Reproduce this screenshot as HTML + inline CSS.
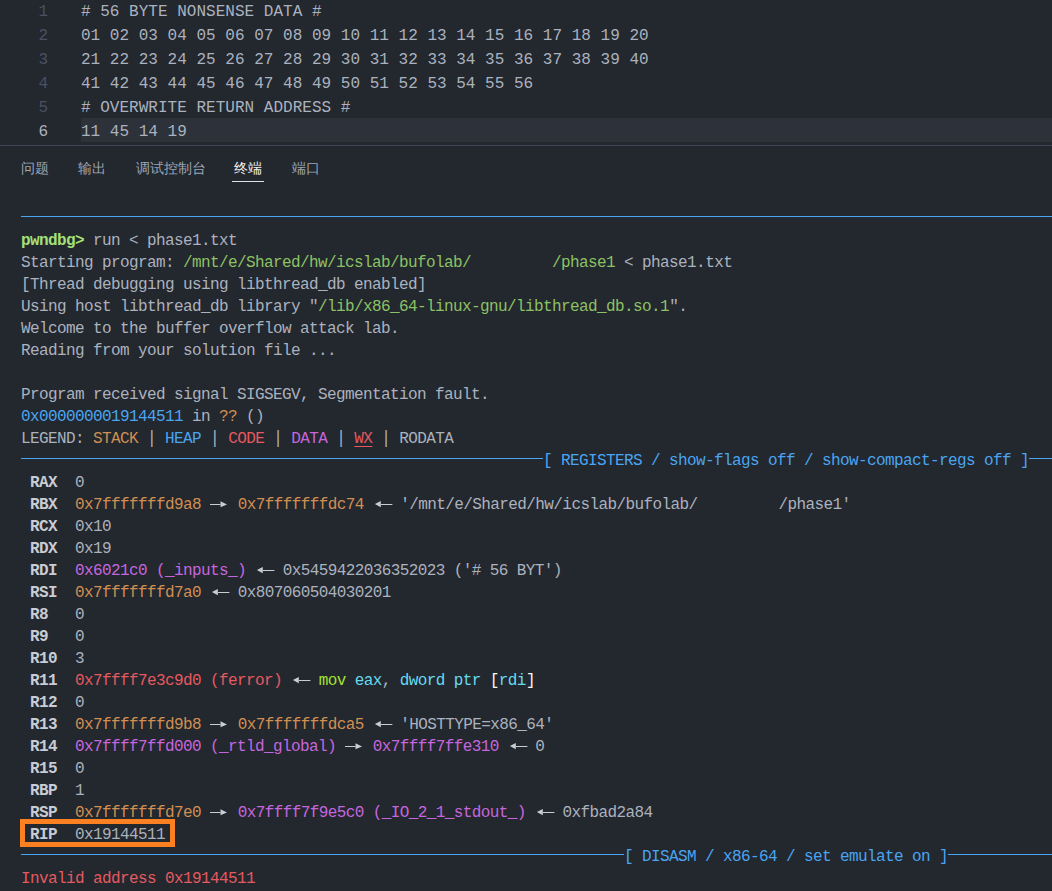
<!DOCTYPE html>
<html><head><meta charset="utf-8"><style>
html,body{margin:0;padding:0;}
body{width:1052px;height:891px;overflow:hidden;background:#23272e;position:relative;font-family:"Liberation Mono",monospace;}
.cur{position:absolute;left:81px;top:118px;width:971px;height:24px;background:#2c313a;}
.ln{position:absolute;left:0;width:48px;text-align:right;height:24px;line-height:24px;font-size:16px;color:#495162;padding-top:2px;}
.ln.act{color:#abb2bf;}
.el{position:absolute;left:81px;height:24px;line-height:24px;font-size:16px;color:#abb2bf;white-space:pre;padding-top:2px;letter-spacing:0.02px;}
.pborder{position:absolute;left:0;top:145px;width:1052px;height:1px;background:#3e4452;}
.panel{position:absolute;left:0;top:146px;width:1052px;height:745px;background:#23272e;}
.tab{position:absolute;top:158px;font-family:"Liberation Sans",sans-serif;font-size:14px;line-height:20px;color:#9da5b4;}
.tab.act{color:#f0f0f0;}
.uline{position:absolute;left:232px;top:181px;width:32px;height:1px;background:#e0e2e6;}
.row{position:absolute;left:21px;height:22px;line-height:22px;font-size:16px;letter-spacing:-0.6px;white-space:pre;color:#abb2bf;padding-top:2px;box-sizing:border-box;}
.hl{position:absolute;height:1px;background:#4aa5f0;}
.ar{vertical-align:top;margin-top:-2px;color:#c8ccd4;margin-right:0.6px;}
.pg{color:#a5e075;font-weight:bold;}
.g{color:#8cc265;}
.b{color:#4aa5f0;}
.y{color:#d18f52;}
.r{color:#e45a60;}
.m{color:#c666de;}
.u{text-decoration:underline;text-underline-offset:3px;text-decoration-thickness:1px;}
.rn{font-weight:bold;color:#c8ccd4;}
.mv{color:#a6e22e;}
.ea{color:#66d9ef;}
.dw{color:#66d9ef;}
.br{color:#f8f8f2;}
.pp{display:inline-block;transform:translateY(-1px) scaleY(1.2);transform-origin:50% 9.5px;}
.box{position:absolute;left:20px;top:819px;width:145px;height:18px;border:5px solid #fb8022;}
</style></head><body>
<div class="cur"></div>
<div class="ln" style="top:-2px">1</div><div class="el" style="top:-2px"># 56 BYTE NONSENSE DATA #</div><div class="ln" style="top:22px">2</div><div class="el" style="top:22px">01 02 03 04 05 06 07 08 09 10 11 12 13 14 15 16 17 18 19 20</div><div class="ln" style="top:46px">3</div><div class="el" style="top:46px">21 22 23 24 25 26 27 28 29 30 31 32 33 34 35 36 37 38 39 40</div><div class="ln" style="top:70px">4</div><div class="el" style="top:70px">41 42 43 44 45 46 47 48 49 50 51 52 53 54 55 56</div><div class="ln" style="top:94px">5</div><div class="el" style="top:94px"># OVERWRITE RETURN ADDRESS #</div><div class="ln act" style="top:118px">6</div><div class="el" style="top:118px">11 45 14 19</div>
<div class="pborder"></div>
<div class="panel">
</div>
<div class="tab" style="left:21px">问题</div>
<div class="tab" style="left:78px">输出</div>
<div class="tab" style="left:136px">调试控制台</div>
<div class="tab act" style="left:234px">终端</div>
<div class="tab" style="left:292px">端口</div>
<div class="uline"></div>
<div class="hl" style="top:216px;left:21px;width:1031px"></div><div class="row" style="top:228px"><span class="pg">pwndbg&gt;</span> run &lt; phase1.txt</div><div class="row" style="top:250px">Starting program: <span class="g">/mnt/e/Shared/hw/icslab/bufolab/         /phase1</span> &lt; phase1.txt</div><div class="row" style="top:272px">[Thread debugging using libthread_db enabled]</div><div class="row" style="top:294px">Using host libthread_db library "<span class="g">/lib/x86_64-linux-gnu/libthread_db.so.1</span>".</div><div class="row" style="top:316px">Welcome to the buffer overflow attack lab.</div><div class="row" style="top:338px">Reading from your solution file ...</div><div class="row" style="top:360px"></div><div class="row" style="top:382px">Program received signal SIGSEGV, Segmentation fault.</div><div class="row" style="top:404px"><span class="b">0x0000000019144511</span> in <span class="y">??</span> ()</div><div class="row" style="top:426px">LEGEND: <span class="y">STACK</span> <span class="pp">|</span> <span class="b">HEAP</span> <span class="pp">|</span> <span class="r">CODE</span> <span class="pp">|</span> <span class="m">DATA</span> <span class="pp">|</span> <span class="r u">WX</span> <span class="pp">|</span> RODATA</div><div class="hl" style="top:458px;left:21px;width:522px"></div><div class="row b" style="top:448px;left:543px">[ REGISTERS / show-flags off / show-compact-regs off ]</div><div class="hl" style="top:458px;left:1029px;width:23px"></div><div class="row" style="top:470px"> <span class="rn">RAX</span>  0</div><div class="row" style="top:492px"> <span class="rn">RBX</span>  <span class="y">0x7fffffffd9a8</span> <svg class="ar" width="18" height="22" viewBox="0 0 18 22"><rect x="-0.5" y="12" width="11" height="1" fill="currentColor"/><polygon points="10.5,9.2 17,12.4 10.5,15.3" fill="currentColor"/></svg> <span class="y">0x7fffffffdc74</span> <svg class="ar" width="18" height="22" viewBox="0 0 18 22" style="overflow:visible"><polygon points="1.9,12.1 7.8,9 7.8,15.2" fill="currentColor"/><rect x="7.8" y="12" width="11.6" height="1" fill="currentColor"/></svg> '/mnt/e/Shared/hw/icslab/bufolab/         /phase1'</div><div class="row" style="top:514px"> <span class="rn">RCX</span>  0x10</div><div class="row" style="top:536px"> <span class="rn">RDX</span>  0x19</div><div class="row" style="top:558px"> <span class="rn">RDI</span>  <span class="m">0x6021c0 (_inputs_)</span> <svg class="ar" width="18" height="22" viewBox="0 0 18 22" style="overflow:visible"><polygon points="1.9,12.1 7.8,9 7.8,15.2" fill="currentColor"/><rect x="7.8" y="12" width="11.6" height="1" fill="currentColor"/></svg> 0x5459422036352023 ('# 56 BYT')</div><div class="row" style="top:580px"> <span class="rn">RSI</span>  <span class="y">0x7fffffffd7a0</span> <svg class="ar" width="18" height="22" viewBox="0 0 18 22" style="overflow:visible"><polygon points="1.9,12.1 7.8,9 7.8,15.2" fill="currentColor"/><rect x="7.8" y="12" width="11.6" height="1" fill="currentColor"/></svg> 0x807060504030201</div><div class="row" style="top:602px"> <span class="rn">R8</span>   0</div><div class="row" style="top:624px"> <span class="rn">R9</span>   0</div><div class="row" style="top:646px"> <span class="rn">R10</span>  3</div><div class="row" style="top:668px"> <span class="rn">R11</span>  <span class="r">0x7ffff7e3c9d0 (ferror)</span> <svg class="ar" width="18" height="22" viewBox="0 0 18 22" style="overflow:visible"><polygon points="1.9,12.1 7.8,9 7.8,15.2" fill="currentColor"/><rect x="7.8" y="12" width="11.6" height="1" fill="currentColor"/></svg> <span class="mv">mov</span> <span class="ea">eax</span>, <span class="dw">dword</span> <span class="dw">ptr</span> <span class="br">[</span><span class="ea">rdi</span><span class="br">]</span></div><div class="row" style="top:690px"> <span class="rn">R12</span>  0</div><div class="row" style="top:712px"> <span class="rn">R13</span>  <span class="y">0x7fffffffd9b8</span> <svg class="ar" width="18" height="22" viewBox="0 0 18 22"><rect x="-0.5" y="12" width="11" height="1" fill="currentColor"/><polygon points="10.5,9.2 17,12.4 10.5,15.3" fill="currentColor"/></svg> <span class="y">0x7fffffffdca5</span> <svg class="ar" width="18" height="22" viewBox="0 0 18 22" style="overflow:visible"><polygon points="1.9,12.1 7.8,9 7.8,15.2" fill="currentColor"/><rect x="7.8" y="12" width="11.6" height="1" fill="currentColor"/></svg> 'HOSTTYPE=x86_64'</div><div class="row" style="top:734px"> <span class="rn">R14</span>  <span class="m">0x7ffff7ffd000 (_rtld_global)</span> <svg class="ar" width="18" height="22" viewBox="0 0 18 22"><rect x="-0.5" y="12" width="11" height="1" fill="currentColor"/><polygon points="10.5,9.2 17,12.4 10.5,15.3" fill="currentColor"/></svg> <span class="m">0x7ffff7ffe310</span> <svg class="ar" width="18" height="22" viewBox="0 0 18 22" style="overflow:visible"><polygon points="1.9,12.1 7.8,9 7.8,15.2" fill="currentColor"/><rect x="7.8" y="12" width="11.6" height="1" fill="currentColor"/></svg> 0</div><div class="row" style="top:756px"> <span class="rn">R15</span>  0</div><div class="row" style="top:778px"> <span class="rn">RBP</span>  1</div><div class="row" style="top:800px"> <span class="rn">RSP</span>  <span class="y">0x7fffffffd7e0</span> <svg class="ar" width="18" height="22" viewBox="0 0 18 22"><rect x="-0.5" y="12" width="11" height="1" fill="currentColor"/><polygon points="10.5,9.2 17,12.4 10.5,15.3" fill="currentColor"/></svg> <span class="m">0x7ffff7f9e5c0 (_IO_2_1_stdout_)</span> <svg class="ar" width="18" height="22" viewBox="0 0 18 22" style="overflow:visible"><polygon points="1.9,12.1 7.8,9 7.8,15.2" fill="currentColor"/><rect x="7.8" y="12" width="11.6" height="1" fill="currentColor"/></svg> 0xfbad2a84</div><div class="row" style="top:822px"> <span class="rn">RIP</span>  0x19144511</div><div class="hl" style="top:854px;left:21px;width:603px"></div><div class="row b" style="top:844px;left:624px">[ DISASM / x86-64 / set emulate on ]</div><div class="hl" style="top:854px;left:948px;width:104px"></div><div class="row" style="top:866px"><span class="r">Invalid address 0x19144511</span></div>
<div class="box"></div>
</body></html>
